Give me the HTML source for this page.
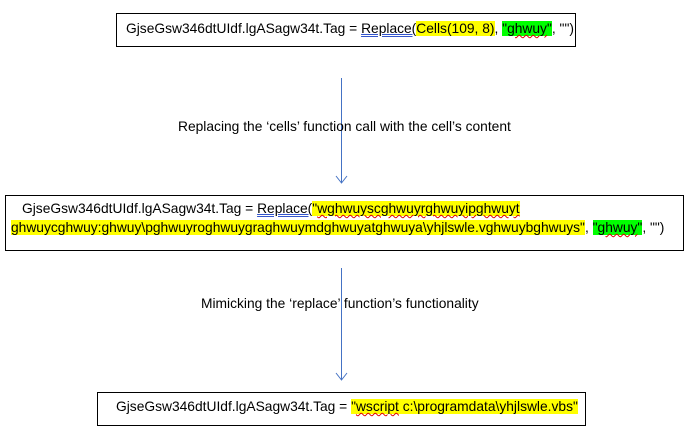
<!DOCTYPE html>
<html><head><meta charset="utf-8"><style>
body{margin:0;width:687px;height:432px;background:#fff;position:relative;overflow:hidden;font-family:"Liberation Sans",sans-serif;font-size:13.8px;color:#000}
.box{position:absolute;border:1.5px solid #000;box-sizing:border-box}
.t{position:absolute;white-space:nowrap}
.y{background:#ffff00}.g{background:#00ff00}
.u{text-decoration:underline double #3355cc}
.w{text-decoration:underline wavy #d00;text-decoration-thickness:1px}
</style></head><body>
<div class="box" style="left:116px;top:13px;width:460px;height:34px"></div>
<div class="t" style="left:126px;top:21px">GjseGsw346dtUIdf.lgASagw34t.Tag = <span class="u">Replace(</span><span class="y">Cells(109, 8)</span>, <span class="g">"<span class="w">ghwuy</span>"</span>, "")</div>

<svg style="position:absolute;left:0;top:0" width="687" height="432">
<line x1="341.5" y1="78" x2="341.5" y2="183" stroke="#4472c4" stroke-width="1"/>
<polyline points="336,176 341.5,183 347,176" fill="none" stroke="#4472c4" stroke-width="1"/>
<line x1="341.5" y1="268" x2="341.5" y2="380" stroke="#4472c4" stroke-width="1"/>
<polyline points="336,373 341.5,380 347,373" fill="none" stroke="#4472c4" stroke-width="1"/>
</svg>

<div class="t" style="left:178px;top:119px">Replacing the ‘cells’ function call with the cell’s content</div>

<div class="box" style="left:5px;top:195px;width:679px;height:56px"></div>
<div class="t" style="left:22px;top:201px">GjseGsw346dtUIdf.lgASagw34t.Tag = <span class="u">Replace(</span><span class="y">"<span class="w">wghwuyscghwuyrghwuyipghwuyt</span></span></div>
<div class="t" style="left:11px;top:220px"><span class="y">ghwuycghwuy:ghwuy\pghwuyroghwuygraghwuymdghwuyatghwuya\yhjlswle.vghwuybghwuys"</span>, <span class="g">"<span class="w">ghwuy</span>"</span>, "")</div>

<div class="t" style="left:201px;top:296px">Mimicking the ‘replace’ function’s functionality</div>

<div class="box" style="left:97px;top:392px;width:489px;height:34px"></div>
<div class="t" style="left:116px;top:399px">GjseGsw346dtUIdf.lgASagw34t.Tag = <span class="y">"<span class="w">wscript</span> c:\programdata\yhjlswle.vbs"</span></div>
</body></html>
